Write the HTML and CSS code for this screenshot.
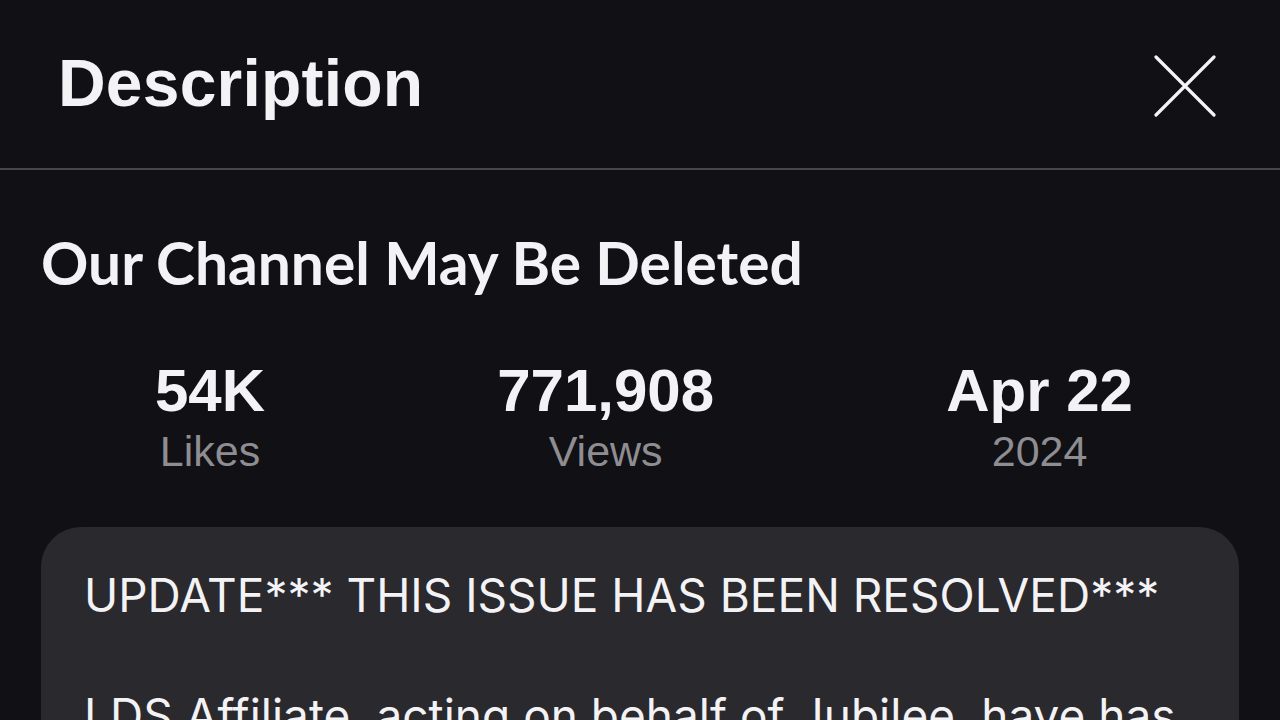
FILE: index.html
```html
<!DOCTYPE html>
<html>
<head>
<meta charset="utf-8">
<link rel="stylesheet" href="styles.css">
</head>
<body>
<div class="sheet">
  <header class="header">
    <h1 class="header-title">Description</h1>
    <button class="close" aria-label="Close">
      <svg width="62" height="62" viewBox="0 0 62 62"><path d="M2 2 L60 60 M60 2 L2 60" stroke="#f4f4f6" stroke-width="3.2" stroke-linecap="round" fill="none"/></svg>
    </button>
  </header>
  <div class="content">
    <h2 class="video-title">Our Channel May Be Deleted</h2>
    <div class="stats">
      <div class="stat"><div class="stat-value">54K</div><div class="stat-label">Likes</div></div>
      <div class="stat"><div class="stat-value">771,908</div><div class="stat-label">Views</div></div>
      <div class="stat"><div class="stat-value">Apr 22</div><div class="stat-label">2024</div></div>
    </div>
    <div class="card">
      <p class="card-text">UPDATE*** THIS ISSUE HAS BEEN RESOLVED***</p>
      <p class="card-text blank">&nbsp;</p>
      <p class="card-text">LDS Affiliate, acting on behalf of Jubilee, have has</p>
    </div>
  </div>
</div>
</body>
</html>
```
FILE: styles.css
```css
html, body {
  margin: 0;
  padding: 0;
  background: #111014;
  overflow: hidden;
}
.sheet {
  width: 1280px;
  height: 720px;
  overflow: hidden;
  background: #111014;
  color: #f3f2f5;
  font-family: "Liberation Sans", Arial, sans-serif;
}
.header {
  box-sizing: border-box;
  height: 170px;
  border-bottom: 2px solid #48474c;
  display: flex;
  align-items: center;
  justify-content: space-between;
  padding: 0 64px 0 58px;
}
.header-title {
  margin: 0;
  font-size: 66px;
  font-weight: 700;
  letter-spacing: 0.2px;
  padding-bottom: 2px;
}
.close {
  background: none;
  border: 0;
  padding: 0;
  width: 62px;
  height: 62px;
  display: flex;
  margin-top: 4px;
}
.content {
  padding: 0 41px;
}
.video-title {
  margin: 0;
  padding-top: 58px;
  font-family: "Lato", sans-serif;
  font-size: 58.7px;
  font-weight: 700;
  line-height: 70px;
}
.stats {
  display: flex;
  justify-content: space-between;
  padding: 0 106px 0 114px;
  margin-top: 61px;
}
.stat {
  display: flex;
  flex-direction: column;
  align-items: center;
}
.stat-value {
  font-size: 60px;
  font-weight: 700;
  line-height: 64px;
}
.stat-label {
  font-size: 43px;
  color: #8e8d92;
  line-height: 56px;
}
.card {
  margin-top: 48px;
  background: #2a292d;
  border-radius: 40px;
  padding: 38px 43px 40px 43px;
}
.card-text {
  margin: 0;
  font-family: "Inter", sans-serif;
  font-size: 46px;
  line-height: 60px;
  white-space: nowrap;
}
```
